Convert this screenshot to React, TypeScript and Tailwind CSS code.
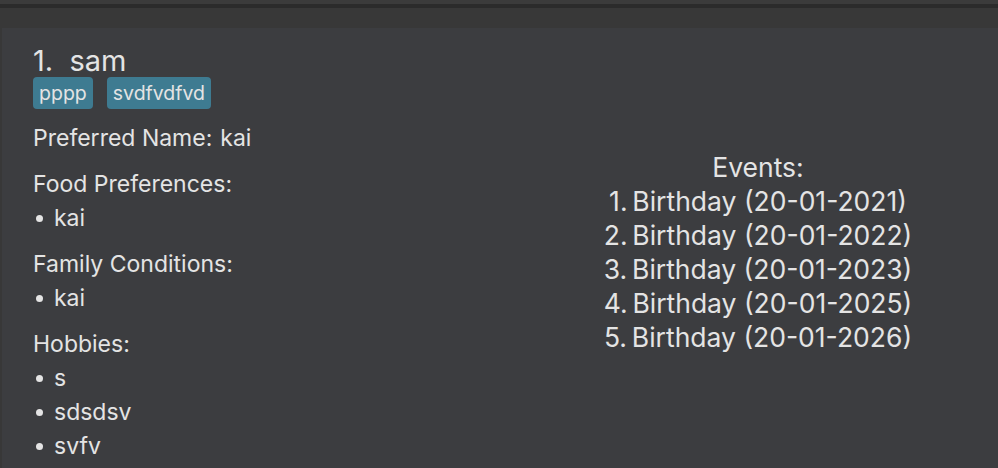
import React from "react";

const font = { fontFamily: "Inter, 'Noto Sans', sans-serif" };

export default function App() {
  const sections = [
    { label: "Food Preferences:", items: ["kai"] },
    { label: "Family Conditions:", items: ["kai"] },
    { label: "Hobbies:", items: ["s", "sdsdsv", "svfv"] },
  ];
  const events = [
    "Birthday (20-01-2021)",
    "Birthday (20-01-2022)",
    "Birthday (20-01-2023)",
    "Birthday (20-01-2025)",
    "Birthday (20-01-2026)",
  ];
  return (
    <div className="w-[998px] h-[468px] overflow-hidden bg-[#383838] flex flex-col text-[#e4e4e4]" style={font}>
      <div className="h-[4px] bg-[#3b3b3b]" />
      <div className="h-[4px] bg-[#2b2b2b]" />
      <div className="h-[20px] bg-[#383838]" />
      <div className="flex-1 ml-[2px] bg-[#3c3d40] flex">
        <div className="w-[516px] pl-[31px] pt-[16px] flex flex-col">
          <div className="text-[29px] leading-[33px] whitespace-pre">1.  sam</div>
          <div className="flex gap-[14px] mt-[0px]">
            <span className="bg-[#3e7b91] rounded-[4px] px-[6px] h-[32px] leading-[32px] text-[19.5px]">pppp</span>
            <span className="bg-[#3e7b91] rounded-[4px] px-[6px] h-[32px] leading-[32px] text-[19.5px]">svdfvdfvd</span>
          </div>
          <div className="text-[23px] leading-[34px] mt-[12px]">
            Preferred Name:<span className="ml-[8px]">kai</span>
          </div>
          {sections.map((s) => (
            <div key={s.label} className="mt-[12px]">
              <div className="text-[23px] leading-[34px]">{s.label}</div>
              {s.items.map((it) => (
                <div key={it} className="text-[23px] leading-[34px] flex items-center">
                  <span className="w-[7px] h-[7px] rounded-full bg-[#e4e4e4] ml-[3px] mr-[11px]" />
                  <span>{it}</span>
                </div>
              ))}
            </div>
          ))}
        </div>
        <div className="flex-1 flex flex-col items-center pt-[122px]">
          <div className="text-[26.5px] leading-[34px]">Events:</div>
          {events.map((e, i) => (
            <div key={i} className="text-[26.5px] leading-[34px] whitespace-pre">
              {i + 1}.{"\u2009"}{e}
            </div>
          ))}
        </div>
      </div>
    </div>
  );
}
